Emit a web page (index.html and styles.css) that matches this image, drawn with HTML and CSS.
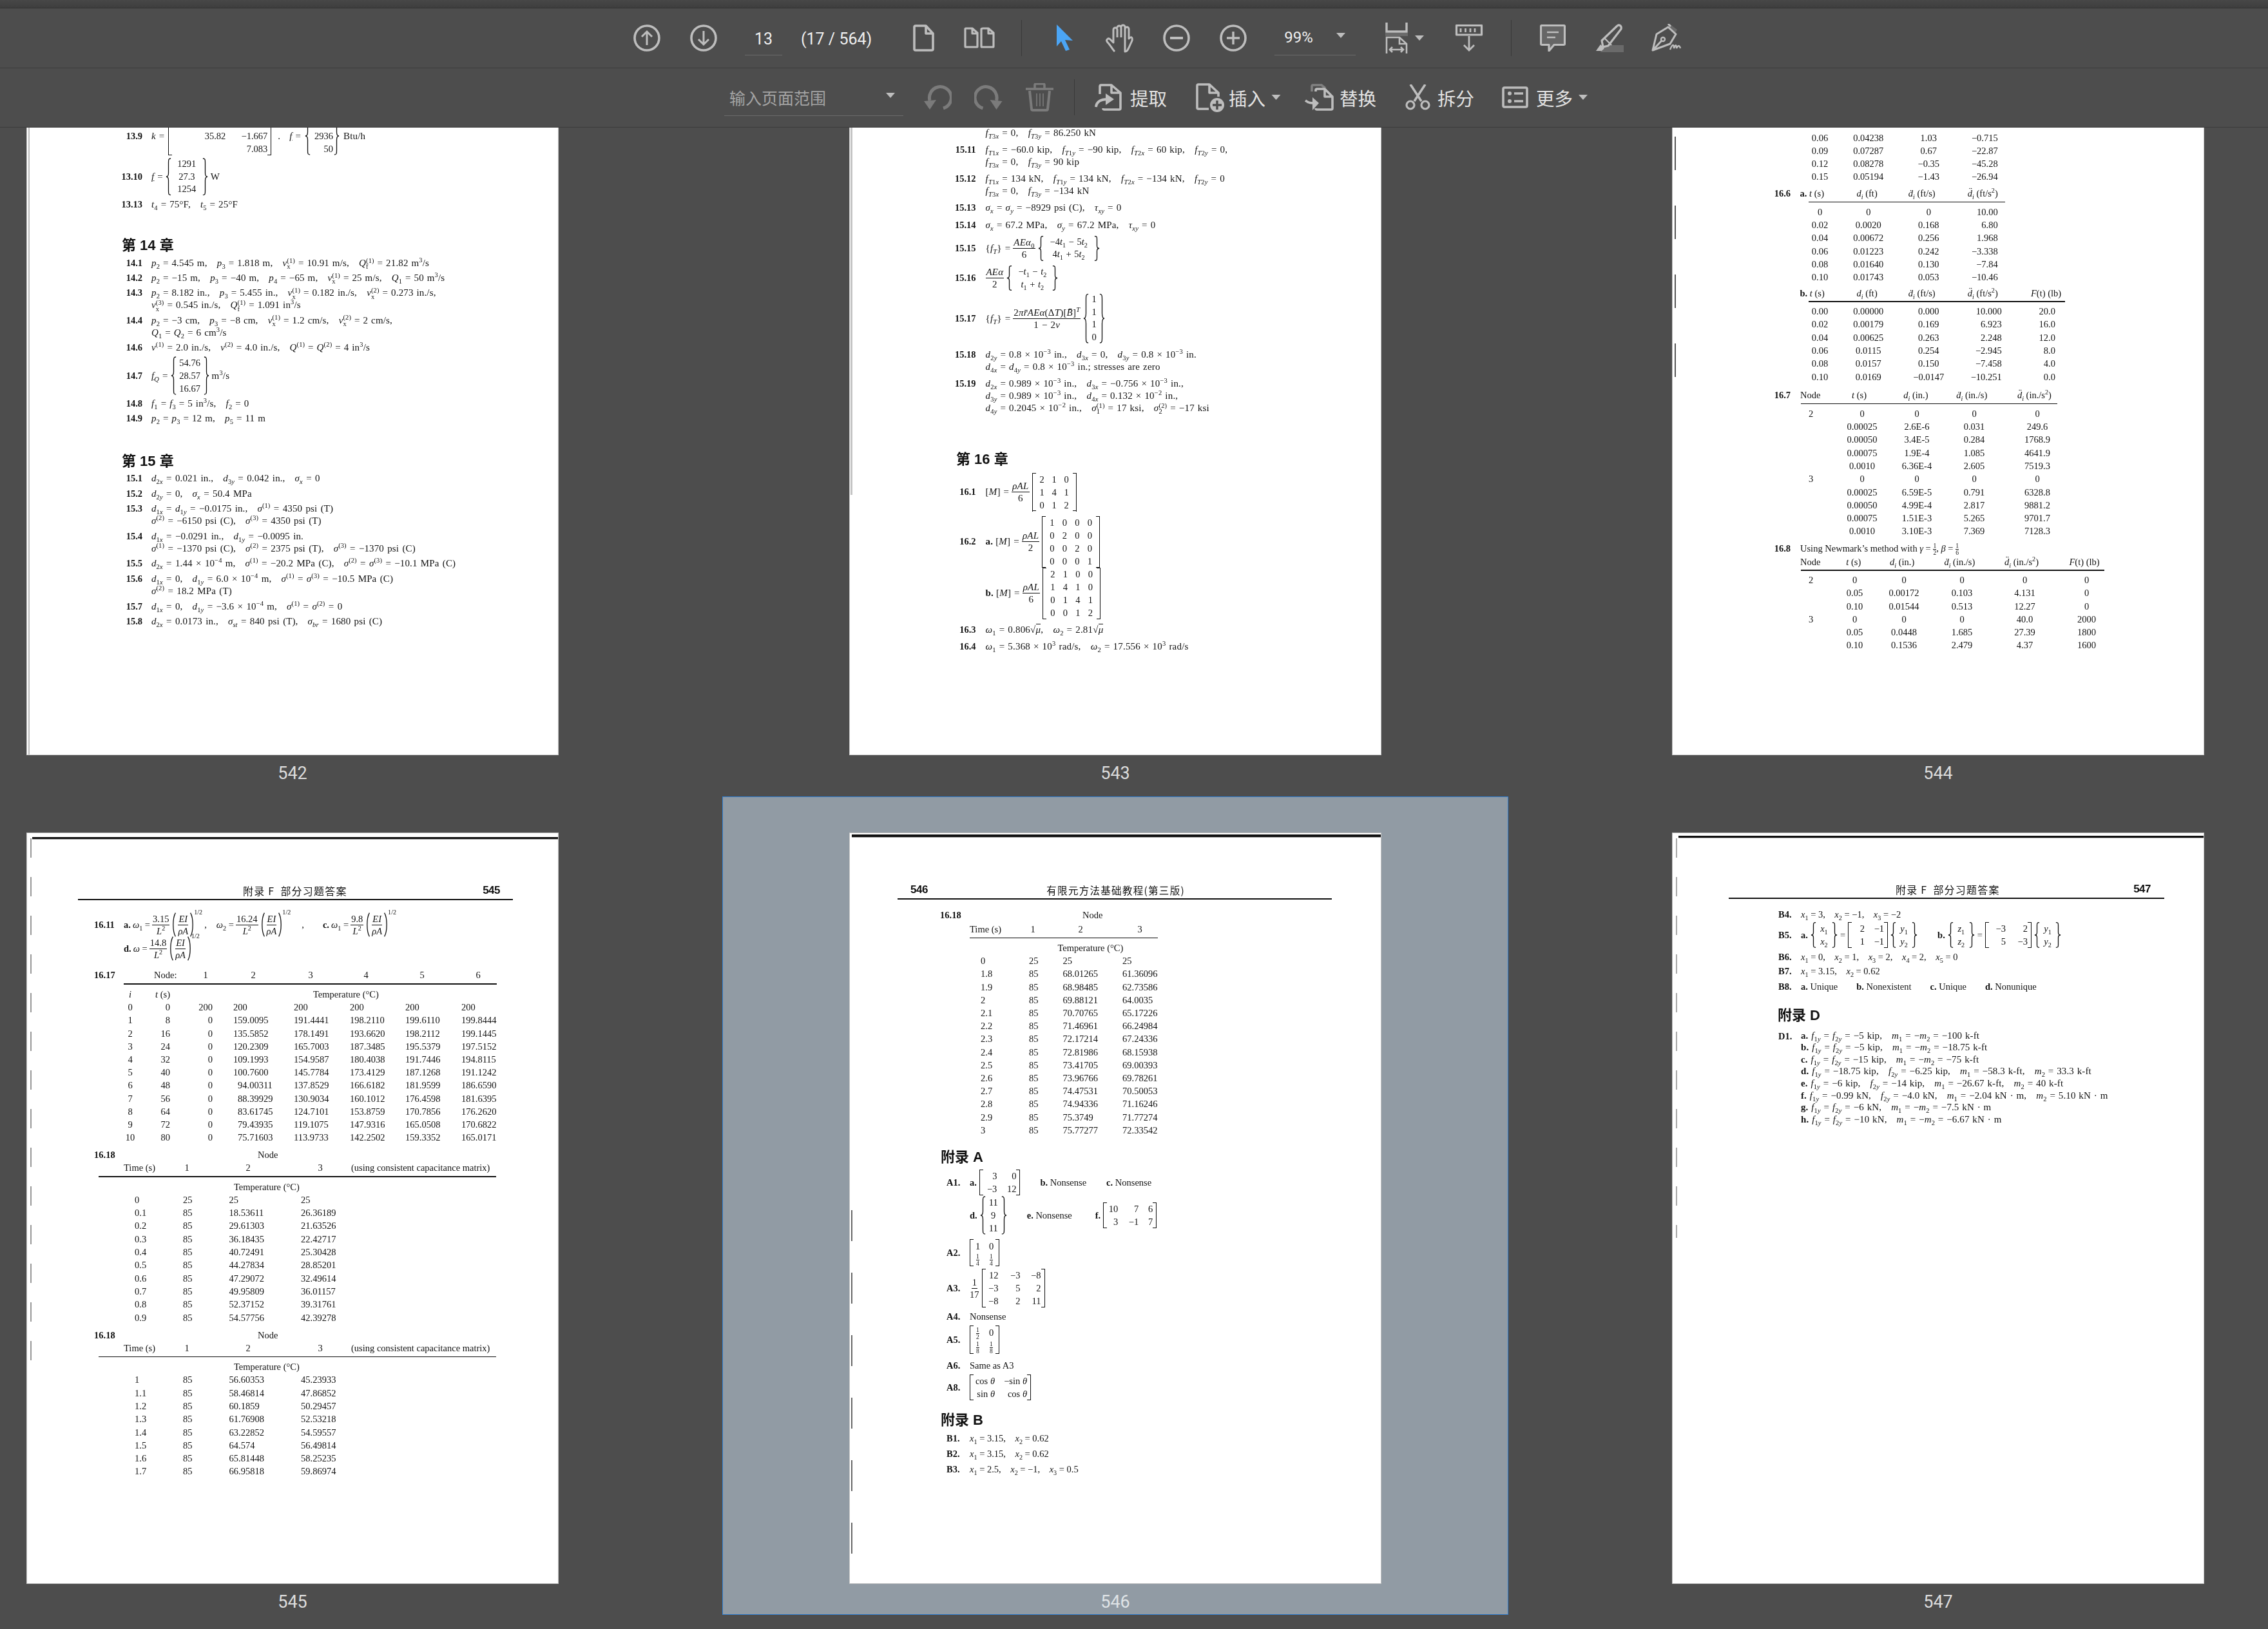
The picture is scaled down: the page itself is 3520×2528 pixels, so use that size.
FILE: index.html
```html
<!DOCTYPE html>
<html lang="zh-CN">
<head>
<meta charset="utf-8">
<title>PDF</title>
<link rel="stylesheet" href="styles.css">
</head>
<body>
<svg class="defs" aria-hidden="true">
  <symbol id="br" viewBox="0 0 10 60" preserveAspectRatio="none"><path d="M9 1C5 1 5 3 5 8V24C5 28 4 30 1 30C4 30 5 32 5 36V52C5 57 5 59 9 59" fill="none" stroke="#111" stroke-width="1.3" vector-effect="non-scaling-stroke"/></symbol>
  <symbol id="pr" viewBox="0 0 10 60" preserveAspectRatio="none"><path d="M8 1C2 14 2 46 8 59" fill="none" stroke="#111" stroke-width="1.3" vector-effect="non-scaling-stroke"/></symbol>
</svg>
<div class="strip"></div>
<div class="bar">
  <svg class="ic ml983" width="42" height="42" viewBox="0 0 42 42"><circle cx="21" cy="21" r="19" stroke-width="3.6"/><path d="M21 32V11M13 19l8-8 8 8" stroke-width="3"/></svg>
  <svg class="ic ml46" width="42" height="42" viewBox="0 0 42 42"><circle cx="21" cy="21" r="19" stroke-width="3.6"/><path d="M21 10V31M13 23l8 8 8-8" stroke-width="3"/></svg>
  <div class="inp ml43 w58 ctr">13</div>
  <div class="txt ml29">(17 / 564)</div>
  <svg class="ic ml64" width="33" height="42" viewBox="0 0 33 42"><path d="M4 2H20L31 14V38Q31 40 29 40H4Q2 40 2 38V4Q2 2 4 2ZM20 2V14H31" stroke-width="3.6" stroke-linejoin="round"/></svg>
  <svg class="ic ml46" width="48" height="33" viewBox="0 0 48 33"><path d="M3 2H13L21 9V30Q21 31 20 31H3Q2 31 2 30V3Q2 2 3 2ZM13 2V10H21M30 2H38L46 9V30Q46 31 45 31H28Q27 31 27 30V3Q27 2 30 2ZM38 2V10H46" stroke-width="3.2" stroke-linejoin="round"/></svg>
  <div class="sep ml41"></div>
  <svg class="ml53" width="27" height="41" viewBox="0 0 27 41"><path d="M1 0L26 25L14 24L21 39L15 41L8 26L1 34Z" fill="#4ba5f5"/></svg>
  <svg class="ic ml50" width="44" height="46" viewBox="0 0 44 46"><path d="M14 44C10 40 8 35 2.500 29C0 26 4 22 7 25L12 30V10A3 3 0 0 1 18 10V22M18 7A3 3 0 0 1 24 7V22M24 6A3 3 0 0 1 30 6V22M30 9A3 3 0 0 1 36 9V24C40 20 42 22 41 27L36 38C34 42 33 44 30 44Z" stroke-width="3" stroke-linejoin="round"/></svg>
  <svg class="ic ml45" width="42" height="42" viewBox="0 0 42 42"><circle cx="21" cy="21" r="19" stroke-width="3.6"/><path d="M11 21H31" stroke-width="4"/></svg>
  <svg class="ic ml46" width="42" height="42" viewBox="0 0 42 42"><circle cx="21" cy="21" r="19" stroke-width="3.6"/><path d="M11 21H31M21 11V31" stroke-width="3.4"/></svg>
  <div class="inp ml43 w126 zoom"><span>99%</span><svg class="caret" width="14" height="8" viewBox="0 0 14 8"><path d="M0 0H14L7 8Z"/></svg></div>
  <svg class="ic ml46" width="35" height="48" viewBox="0 0 35 48"><path d="M2 0V14H33V0" stroke-width="3.4"/><path class="dim" d="M0 16H35V21H0Z"/><path d="M2 48V23H22L33 33V48M22 23V33H33M7 42H28M11 38l-4 4 4 4M24 38l4 4-4 4" stroke-width="2.6"/></svg>
  <svg class="caret ml11" width="14" height="8" viewBox="0 0 14 8"><path d="M0 0H14L7 8Z"/></svg>
  <svg class="ic ml48" width="44" height="42" viewBox="0 0 44 42"><path d="M2.500 1.500H41.500V16H2.500Z" stroke-width="3.2" stroke-linejoin="round"/><path d="M9 6V12M16.500 6V12M24 6V12M31 6V12M22 18V40M14 32l8 8 8-8" stroke-width="2.8"/></svg>
  <div class="sep ml43"></div>
  <svg class="ic ml44" width="40" height="42" viewBox="0 0 40 42"><path class="dimf" d="M3 1.500H37Q38.500 1.500 38.500 3V30Q38.500 31.500 37 31.500H22L14 41V31.500H3Q1.500 31.500 1.500 30V3Q1.500 1.500 3 1.500Z" stroke-width="3.2" stroke-linejoin="round"/><path d="M11 12H29M11 20H24" stroke-width="2.400"/></svg>
  <svg class="ic ml46" width="44" height="44" viewBox="0 0 44 44"><path class="dim" d="M12 33H44V44H8Z"/><path d="M10 26L34 3Q37 1 39 3Q41 5 40 8L20 34L12 36Z" stroke-width="3.200" stroke-linejoin="round"/><path class="solid" d="M8 32l6 6-4 4H1Z"/><path d="M14 22L25 33" stroke-width="2.400"/></svg>
  <svg class="ic ml42" width="47" height="43" viewBox="0 0 47 43"><path class="dim" d="M27 7L37 16L41 9L30 1Z"/><path d="M27 5L39 16L30 31L3 41L9 16ZM4 40L17 26M31 4L27 0" stroke-width="3" stroke-linejoin="round"/><circle cx="19" cy="24" r="3" stroke-width="2.400"/><path d="M30 40C34 30 36 32 36 38C39 30 40 34 40 38C43 32 45 34 46 38" stroke-width="2.400"/></svg>
</div>
<div class="bar">
  <div class="inp2 ml1124"><span>输入页面范围</span><svg class="caret" width="14" height="8" viewBox="0 0 14 8"><path d="M0 0H14L7 8Z"/></svg></div>
  <svg class="ic off ml32" width="43" height="38" viewBox="0 0 43 38"><path d="M30 36A17 17 0 1 0 9 24" stroke-width="5"/><path class="solid" d="M0 25L19 23L9 38Z"/></svg>
  <svg class="ic off ml35" width="44" height="38" viewBox="0 0 43 38"><path d="M13 36A17 17 0 1 1 34 24" stroke-width="5"/><path class="solid" d="M43 25L24 23L34 38Z"/></svg>
  <svg class="ic off ml36" width="43" height="44" viewBox="0 0 43 44"><path d="M0 9H43M14 8V3Q14 1 16 1H27Q29 1 29 3V8" stroke-width="3.600"/><path d="M6 12L9 40Q9 42 11 42H32Q34 42 34 40L37 12" stroke-width="4"/><path d="M17 16V36M22 16V36M27 16V36" stroke-width="1.600"/></svg>
  <div class="sep ml32 tall"></div>
  <svg class="ic ml30" width="43" height="42" viewBox="0 0 43 42"><path d="M9 16V4Q9 2 11 2H27L41 14V38Q41 40 39 40H16Q14 40 14 38M27 2V14H41" stroke-width="3.600" stroke-linejoin="round"/><path d="M3 36C4 27 12 24 21 24" stroke-width="4"/><path class="solid" d="M18 15L31 24L18 33Z"/></svg>
  <div class="act ml13">提取</div>
  <svg class="ic ml44" width="44" height="45" viewBox="0 0 44 45"><path d="M20 40H4Q2 40 2 38V4Q2 2 4 2H21L35 15V21M21 2V15H35" stroke-width="3.600" stroke-linejoin="round"/><circle class="solid" cx="33" cy="34" r="11"/><path class="hole" d="M33 27V41M26 34H40" stroke-width="3.400"/></svg>
  <div class="act ml7">插入</div>
  <svg class="caret ml8" width="15" height="8" viewBox="0 0 14 8"><path d="M0 0H14L7 8Z"/></svg>
  <svg class="ic ml37" width="45" height="42" viewBox="0 0 45 42"><path class="ghost" d="M11 12V4Q11 2 13 2H26L32 7" stroke-width="3.600"/><path d="M17 12V10Q17 8 19 8H31L43 20V38Q43 40 41 40H19Q17 40 17 38M31 8V20H43" stroke-width="3.600" stroke-linejoin="round"/><path d="M1 26C6 30 10 30 15 30" stroke-width="3.600"/><path class="solid" d="M12 21L22 30L12 41Z"/></svg>
  <div class="act ml9">替换</div>
  <svg class="ic ml44" width="39" height="40" viewBox="0 0 39 40"><path d="M8 0L25 26M31 0L14 26" stroke-width="3.600"/><circle cx="8" cy="32" r="6" stroke-width="3.200"/><circle cx="31" cy="32" r="6" stroke-width="3.200"/></svg>
  <div class="act ml11">拆分</div>
  <svg class="ic ml42" width="41" height="34" viewBox="0 0 41 34"><rect x="2" y="2" width="37" height="30" rx="2" stroke-width="3.600"/><circle class="solid" cx="12" cy="11" r="3"/><circle class="solid" cx="12" cy="23" r="3"/><path d="M19 11H33M19 23H33" stroke-width="3.400"/></svg>
  <div class="act ml12">更多</div>
  <svg class="caret ml8" width="14" height="8" viewBox="0 0 14 8"><path d="M0 0H14L7 8Z"/></svg>
</div>

<main class="grid">
  <!-- 542 -->
  <section class="cell top">
    <div class="sheet short p542">
      <div class="edge e542"></div>
      <div class="doc">
        <div class="q mid first">
          <b class="n">13.9</b>
          <div class="a f g6"><span><i>k</i> =</span>
            <div class="mx r m139"><span></span><span></span><span>35.82</span><span>&minus;1.667</span><span></span><span>7.083</span></div>
            <span class="ml4">.</span><span class="ml8"><i class="u">f</i> =</span>
            <div class="bc m139b"><svg class="b"><use href="#br"/></svg><div><span></span><span>2936</span><span>50</span></div><svg class="b"><use href="#br"/></svg></div>
            <span>Btu/h</span>
          </div>
        </div>
        <div class="q mid">
          <b class="n">13.10</b>
          <div class="a f g4"><span><i class="u">f</i> =</span>
            <div class="bc w46"><svg class="b"><use href="#br"/></svg><div><span>1291</span><span>27.3</span><span>1254</span></div><svg class="b"><use href="#br"/></svg></div>
            <span>W</span>
          </div>
        </div>
        <div class="q"><b class="n">13.13</b><div class="a"><i>t</i><sub>4</sub> = 75&deg;F,&emsp;<i>t</i><sub>5</sub> = 25&deg;F</div></div>
        <div class="ch c14">第 14 章</div>
        <div class="q"><b class="n">14.1</b><div class="a"><i>p</i><sub>2</sub> = 4.545 m,&emsp;<i>p</i><sub>3</sub> = 1.818 m,&emsp;<i>v</i><span class="ss"><sup>(1)</sup><sub>x</sub></span> = 10.91 m/s,&emsp;<i>Q</i><span class="ss"><sup>(1)</sup><sub>f</sub></span> = 21.82 m<sup>3</sup>/s</div></div>
        <div class="q"><b class="n">14.2</b><div class="a"><i>p</i><sub>2</sub> = &minus;15 m,&emsp;<i>p</i><sub>3</sub> = &minus;40 m,&emsp;<i>p</i><sub>4</sub> = &minus;65 m,&emsp;<i>v</i><span class="ss"><sup>(1)</sup><sub>x</sub></span> = 25 m/s,&emsp;<i>Q</i><sub>1</sub> = 50 m<sup>3</sup>/s</div></div>
        <div class="q"><b class="n">14.3</b><div class="a"><div><i>p</i><sub>2</sub> = 8.182 in.,&emsp;<i>p</i><sub>3</sub> = 5.455 in.,&emsp;<i>v</i><span class="ss"><sup>(1)</sup><sub>x</sub></span> = 0.182 in./s,&emsp;<i>v</i><span class="ss"><sup>(2)</sup><sub>x</sub></span> = 0.273 in./s,</div><div><i>v</i><span class="ss"><sup>(3)</sup><sub>x</sub></span> = 0.545 in./s,&emsp;<i>Q</i><span class="ss"><sup>(1)</sup><sub>f</sub></span> = 1.091 in<sup>3</sup>/s</div></div></div>
        <div class="q"><b class="n">14.4</b><div class="a"><div><i>p</i><sub>2</sub> = &minus;3 cm,&emsp;<i>p</i><sub>3</sub> = &minus;8 cm,&emsp;<i>v</i><span class="ss"><sup>(1)</sup><sub>x</sub></span> = 1.2 cm/s,&emsp;<i>v</i><span class="ss"><sup>(2)</sup><sub>x</sub></span> = 2 cm/s,</div><div><i>Q</i><sub>1</sub> = <i>Q</i><sub>2</sub> = 6 cm<sup>3</sup>/s</div></div></div>
        <div class="q"><b class="n">14.6</b><div class="a"><i>v</i><sup>(1)</sup> = 2.0 in./s,&emsp;<i>v</i><sup>(2)</sup> = 4.0 in./s,&emsp;<i>Q</i><sup>(1)</sup> = <i>Q</i><sup>(2)</sup> = 4 in<sup>3</sup>/s</div></div>
        <div class="q mid">
          <b class="n">14.7</b>
          <div class="a f g4"><span><i class="u">f</i><sub><i>Q</i></sub> =</span>
            <div class="bc w40 pitch20"><svg class="b"><use href="#br"/></svg><div><span>54.76</span><span>28.57</span><span>16.67</span></div><svg class="b"><use href="#br"/></svg></div>
            <span>m<sup>3</sup>/s</span>
          </div>
        </div>
        <div class="q"><b class="n">14.8</b><div class="a"><i>f</i><sub>1</sub> = <i>f</i><sub>3</sub> = 5 in<sup>3</sup>/s,&emsp;<i>f</i><sub>2</sub> = 0</div></div>
        <div class="q"><b class="n">14.9</b><div class="a"><i>p</i><sub>2</sub> = <i>p</i><sub>3</sub> = 12 m,&emsp;<i>p</i><sub>5</sub> = 11 m</div></div>
        <div class="ch c15">第 15 章</div>
        <div class="q"><b class="n">15.1</b><div class="a"><i>d</i><sub>2<i>x</i></sub> = 0.021 in.,&emsp;<i>d</i><sub>3<i>y</i></sub> = 0.042 in.,&emsp;<i>&sigma;</i><sub><i>x</i></sub> = 0</div></div>
        <div class="q"><b class="n">15.2</b><div class="a"><i>d</i><sub>2<i>y</i></sub> = 0,&emsp;<i>&sigma;</i><sub><i>x</i></sub> = 50.4 MPa</div></div>
        <div class="q"><b class="n">15.3</b><div class="a"><div><i>d</i><sub>1<i>x</i></sub> = <i>d</i><sub>1<i>y</i></sub> = &minus;0.0175 in.,&emsp;<i>&sigma;</i><sup>(1)</sup> = 4350 psi (T)</div><div><i>&sigma;</i><sup>(2)</sup> = &minus;6150 psi (C),&emsp;<i>&sigma;</i><sup>(3)</sup> = 4350 psi (T)</div></div></div>
        <div class="q"><b class="n">15.4</b><div class="a"><div><i>d</i><sub>1<i>x</i></sub> = &minus;0.0291 in.,&emsp;<i>d</i><sub>1<i>y</i></sub> = &minus;0.0095 in.</div><div><i>&sigma;</i><sup>(1)</sup> = &minus;1370 psi (C),&emsp;<i>&sigma;</i><sup>(2)</sup> = 2375 psi (T),&emsp;<i>&sigma;</i><sup>(3)</sup> = &minus;1370 psi (C)</div></div></div>
        <div class="q"><b class="n">15.5</b><div class="a"><i>d</i><sub>2<i>x</i></sub> = 1.44 &times; 10<sup>&minus;4</sup> m,&emsp;<i>&sigma;</i><sup>(1)</sup> = &minus;20.2 MPa (C),&emsp;<i>&sigma;</i><sup>(2)</sup> = <i>&sigma;</i><sup>(3)</sup> = &minus;10.1 MPa (C)</div></div>
        <div class="q"><b class="n">15.6</b><div class="a"><div><i>d</i><sub>1<i>x</i></sub> = 0,&emsp;<i>d</i><sub>1<i>y</i></sub> = 6.0 &times; 10<sup>&minus;4</sup> m,&emsp;<i>&sigma;</i><sup>(1)</sup> = <i>&sigma;</i><sup>(3)</sup> = &minus;10.5 MPa (C)</div><div><i>&sigma;</i><sup>(2)</sup> = 18.2 MPa (T)</div></div></div>
        <div class="q"><b class="n">15.7</b><div class="a"><i>d</i><sub>1<i>x</i></sub> = 0,&emsp;<i>d</i><sub>1<i>y</i></sub> = &minus;3.6 &times; 10<sup>&minus;4</sup> m,&emsp;<i>&sigma;</i><sup>(1)</sup> = <i>&sigma;</i><sup>(2)</sup> = 0</div></div>
        <div class="q"><b class="n">15.8</b><div class="a"><i>d</i><sub>2<i>x</i></sub> = 0.0173 in.,&emsp;<i>&sigma;</i><sub><i>st</i></sub> = 840 psi (T),&emsp;<i>&sigma;</i><sub><i>br</i></sub> = 1680 psi (C)</div></div>
      </div>
    </div>
    <div class="lab">542</div>
  </section>

  <!-- 543 -->
  <section class="cell top">
    <div class="sheet short p543">
      <div class="edge e543"></div>
      <div class="doc">
        <div class="q first"><b class="n"></b><div class="a"><i>f</i><sub><i>T</i>3<i>x</i></sub> = 0,&emsp;<i>f</i><sub><i>T</i>3<i>y</i></sub> = 86.250 kN</div></div>
        <div class="q"><b class="n">15.11</b><div class="a"><div><i>f</i><sub><i>T</i>1<i>x</i></sub> = &minus;60.0 kip,&emsp;<i>f</i><sub><i>T</i>1<i>y</i></sub> = &minus;90 kip,&emsp;<i>f</i><sub><i>T</i>2<i>x</i></sub> = 60 kip,&emsp;<i>f</i><sub><i>T</i>2<i>y</i></sub> = 0,</div><div><i>f</i><sub><i>T</i>3<i>x</i></sub> = 0,&emsp;<i>f</i><sub><i>T</i>3<i>y</i></sub> = 90 kip</div></div></div>
        <div class="q"><b class="n">15.12</b><div class="a"><div><i>f</i><sub><i>T</i>1<i>x</i></sub> = 134 kN,&emsp;<i>f</i><sub><i>T</i>1<i>y</i></sub> = 134 kN,&emsp;<i>f</i><sub><i>T</i>2<i>x</i></sub> = &minus;134 kN,&emsp;<i>f</i><sub><i>T</i>2<i>y</i></sub> = 0</div><div><i>f</i><sub><i>T</i>3<i>x</i></sub> = 0,&emsp;<i>f</i><sub><i>T</i>3<i>y</i></sub> = &minus;134 kN</div></div></div>
        <div class="q"><b class="n">15.13</b><div class="a"><i>&sigma;</i><sub><i>x</i></sub> = <i>&sigma;</i><sub><i>y</i></sub> = &minus;8929 psi (C),&emsp;<i>&tau;</i><sub><i>xy</i></sub> = 0</div></div>
        <div class="q"><b class="n">15.14</b><div class="a"><i>&sigma;</i><sub><i>x</i></sub> = 67.2 MPa,&emsp;<i>&sigma;</i><sub><i>y</i></sub> = 67.2 MPa,&emsp;<i>&tau;</i><sub><i>xy</i></sub> = 0</div></div>
        <div class="q mid"><b class="n">15.15</b>
          <div class="a f g4"><span>{<i>f<sub>T</sub></i>} =</span><span class="fr"><span><i>AE&alpha;</i><sub>0</sub></span><span>6</span></span>
            <div class="bc w76"><svg class="b"><use href="#br"/></svg><div><span>&minus;4<i>t</i><sub>1</sub> &minus; 5<i>t</i><sub>2</sub></span><span>4<i>t</i><sub>1</sub> + 5<i>t</i><sub>2</sub></span></div><svg class="b"><use href="#br"/></svg></div>
          </div></div>
        <div class="q mid"><b class="n">15.16</b>
          <div class="a f g4"><span class="fr"><span><i>AE&alpha;</i></span><span>2</span></span>
            <div class="bc w60"><svg class="b"><use href="#br"/></svg><div><span>&minus;<i>t</i><sub>1</sub> &minus; <i>t</i><sub>2</sub></span><span><i>t</i><sub>1</sub> + <i>t</i><sub>2</sub></span></div><svg class="b"><use href="#br"/></svg></div>
          </div></div>
        <div class="q mid tight"><b class="n">15.17</b>
          <div class="a f g4"><span>{<i>f<sub>T</sub></i>} =</span><span class="fr"><span>2<i>&pi;r&#772;AE&alpha;</i>(&Delta;<i>T</i>)[<i>B&#772;</i>]<sup><i>T</i></sup></span><span>1 &minus; 2<i>v</i></span></span>
            <div class="bc w14"><svg class="b"><use href="#br"/></svg><div><span>1</span><span>1</span><span>1</span><span>0</span></div><svg class="b"><use href="#br"/></svg></div>
          </div></div>
        <div class="q"><b class="n">15.18</b><div class="a"><div><i>d</i><sub>2<i>y</i></sub> = 0.8 &times; 10<sup>&minus;3</sup> in.,&emsp;<i>d</i><sub>3<i>x</i></sub> = 0,&emsp;<i>d</i><sub>3<i>y</i></sub> = 0.8 &times; 10<sup>&minus;3</sup> in.</div><div><i>d</i><sub>4<i>x</i></sub> = <i>d</i><sub>4<i>y</i></sub> = 0.8 &times; 10<sup>&minus;3</sup> in.; stresses are zero</div></div></div>
        <div class="q"><b class="n">15.19</b><div class="a"><div><i>d</i><sub>2<i>x</i></sub> = 0.989 &times; 10<sup>&minus;3</sup> in.,&emsp;<i>d</i><sub>3<i>x</i></sub> = &minus;0.756 &times; 10<sup>&minus;3</sup> in.,</div><div><i>d</i><sub>3<i>y</i></sub> = 0.989 &times; 10<sup>&minus;3</sup> in.,&emsp;<i>d</i><sub>4<i>x</i></sub> = 0.132 &times; 10<sup>&minus;2</sup> in.,</div><div><i>d</i><sub>4<i>y</i></sub> = 0.2045 &times; 10<sup>&minus;2</sup> in.,&emsp;<i>&sigma;</i><span class="ss"><sup>(1)</sup><sub>1</sub></span> = 17 ksi,&emsp;<i>&sigma;</i><span class="ss"><sup>(2)</sup><sub>2</sub></span> = &minus;17 ksi</div></div></div>
        <div class="ch c16">第 16 章</div>
        <div class="q mid"><b class="n">16.1</b>
          <div class="a f g4"><span>[<i>M</i>] =</span><span class="fr"><span><i>&rho;AL</i></span><span>6</span></span>
            <div class="mx k3 p20"><span>2</span><span>1</span><span>0</span><span>1</span><span>4</span><span>1</span><span>0</span><span>1</span><span>2</span></div>
          </div></div>
        <div class="q mid"><b class="n">16.2</b>
          <div class="a f g4"><b class="b5">a.</b><span>[<i>M</i>] =</span><span class="fr"><span><i>&rho;AL</i></span><span>2</span></span>
            <div class="mx k4 p20"><span>1</span><span>0</span><span>0</span><span>0</span><span>0</span><span>2</span><span>0</span><span>0</span><span>0</span><span>0</span><span>2</span><span>0</span><span>0</span><span>0</span><span>0</span><span>1</span></div>
          </div></div>
        <div class="q mid flush"><b class="n"></b>
          <div class="a f g4"><b class="b5">b.</b><span>[<i>M</i>] =</span><span class="fr"><span><i>&rho;AL</i></span><span>6</span></span>
            <div class="mx k4 p20"><span>2</span><span>1</span><span>0</span><span>0</span><span>1</span><span>4</span><span>1</span><span>0</span><span>0</span><span>1</span><span>4</span><span>1</span><span>0</span><span>0</span><span>1</span><span>2</span></div>
          </div></div>
        <div class="q"><b class="n">16.3</b><div class="a"><i>&omega;</i><sub>1</sub> = 0.806&radic;<span class="ov"><i>&mu;</i></span>,&emsp;<i>&omega;</i><sub>2</sub> = 2.81&radic;<span class="ov"><i>&mu;</i></span></div></div>
        <div class="q"><b class="n">16.4</b><div class="a"><i>&omega;</i><sub>1</sub> = 5.368 &times; 10<sup>3</sup> rad/s,&emsp;<i>&omega;</i><sub>2</sub> = 17.556 &times; 10<sup>3</sup> rad/s</div></div>
      </div>
    </div>
    <div class="lab">543</div>
  </section>

  <!-- 544 -->
  <section class="cell top">
    <div class="sheet short p544">
      <div class="edge e544"></div>
      <div class="doc">
        <div class="sec s0"><b class="n"></b><div class="a">
          <div class="tb t66 s00">
            <span>0.06</span><span>0.04238</span><span>1.03</span><span>&minus;0.715</span>
            <span>0.09</span><span>0.07287</span><span>0.67</span><span>&minus;22.87</span>
            <span>0.12</span><span>0.08278</span><span>&minus;0.35</span><span>&minus;45.28</span>
            <span>0.15</span><span>0.05194</span><span>&minus;1.43</span><span>&minus;26.94</span>
          </div></div></div>
        <div class="sec s1"><b class="n">16.6</b><div class="a">
          <div class="th h66"><span><b>a.</b> <i>t</i> (s)</span><span><i>d<sub>i</sub></i> (ft)</span><span><i>&#7691;<sub>i</sub></i> (ft/s)</span><span><i>d&#776;<sub>i</sub></i> (ft/s<sup>2</sup>)</span></div>
          <div class="rule r66a"></div>
          <div class="tb t66">
            <span>0</span><span>0</span><span>0</span><span>10.00</span>
            <span>0.02</span><span>0.0020</span><span>0.168</span><span>6.80</span>
            <span>0.04</span><span>0.00672</span><span>0.256</span><span>1.968</span>
            <span>0.06</span><span>0.01223</span><span>0.242</span><span>&minus;3.338</span>
            <span>0.08</span><span>0.01640</span><span>0.130</span><span>&minus;7.84</span>
            <span>0.10</span><span>0.01743</span><span>0.053</span><span>&minus;10.46</span>
          </div></div></div>
        <div class="sec s2"><b class="n"></b><div class="a">
          <div class="th h66b"><span><b>b.</b> <i>t</i> (s)</span><span><i>d<sub>i</sub></i> (ft)</span><span><i>&#7691;<sub>i</sub></i> (ft/s)</span><span><i>d&#776;<sub>i</sub></i> (ft/s<sup>2</sup>)</span><span><i>F</i>(t) (lb)</span></div>
          <div class="rule r66b"></div>
          <div class="tb t66b">
            <span>0.00</span><span>0.00000</span><span>0.000</span><span>10.000</span><span>20.0</span>
            <span>0.02</span><span>0.00179</span><span>0.169</span><span>6.923</span><span>16.0</span>
            <span>0.04</span><span>0.00625</span><span>0.263</span><span>2.248</span><span>12.0</span>
            <span>0.06</span><span>0.0115</span><span>0.254</span><span>&minus;2.945</span><span>8.0</span>
            <span>0.08</span><span>0.0157</span><span>0.150</span><span>&minus;7.458</span><span>4.0</span>
            <span>0.10</span><span>0.0169</span><span>&minus;0.0147</span><span>&minus;10.251</span><span>0.0</span>
          </div></div></div>
        <div class="sec s3"><b class="n">16.7</b><div class="a">
          <div class="th h67"><span>Node</span><span><i>t</i> (s)</span><span><i>d<sub>i</sub></i> (in.)</span><span><i>&#7691;<sub>i</sub></i> (in./s)</span><span><i>d&#776;<sub>i</sub></i> (in./s<sup>2</sup>)</span></div>
          <div class="rule r67"></div>
          <div class="tb t67">
            <span>2</span><span>0</span><span>0</span><span>0</span><span>0</span>
            <span></span><span>0.00025</span><span>2.6E-6</span><span>0.031</span><span>249.6</span>
            <span></span><span>0.00050</span><span>3.4E-5</span><span>0.284</span><span>1768.9</span>
            <span></span><span>0.00075</span><span>1.9E-4</span><span>1.085</span><span>4641.9</span>
            <span></span><span>0.0010</span><span>6.36E-4</span><span>2.605</span><span>7519.3</span>
            <span>3</span><span>0</span><span>0</span><span>0</span><span>0</span>
            <span></span><span>0.00025</span><span>6.59E-5</span><span>0.791</span><span>6328.8</span>
            <span></span><span>0.00050</span><span>4.99E-4</span><span>2.817</span><span>9881.2</span>
            <span></span><span>0.00075</span><span>1.51E-3</span><span>5.265</span><span>9701.7</span>
            <span></span><span>0.0010</span><span>3.10E-3</span><span>7.369</span><span>7128.3</span>
          </div></div></div>
        <div class="sec s4"><b class="n">16.8</b><div class="a">
          <div class="th top19"><span>Using Newmark&rsquo;s method with <i>&gamma;</i> = <span class="sf"><span>1</span><span>2</span></span>, <i>&beta;</i> = <span class="sf"><span>1</span><span>6</span></span></span></div>
          <div class="th h68"><span>Node</span><span><i>t</i> (s)</span><span><i>d<sub>i</sub></i> (in.)</span><span><i>&#7691;<sub>i</sub></i> (in./s)</span><span><i>d&#776;<sub>i</sub></i> (in./s<sup>2</sup>)</span><span><i>F</i>(t) (lb)</span></div>
          <div class="rule r68"></div>
          <div class="tb t68">
            <span>2</span><span>0</span><span>0</span><span>0</span><span>0</span><span>0</span>
            <span></span><span>0.05</span><span>0.00172</span><span>0.103</span><span>4.131</span><span>0</span>
            <span></span><span>0.10</span><span>0.01544</span><span>0.513</span><span>12.27</span><span>0</span>
            <span>3</span><span>0</span><span>0</span><span>0</span><span>40.0</span><span>2000</span>
            <span></span><span>0.05</span><span>0.0448</span><span>1.685</span><span>27.39</span><span>1800</span>
            <span></span><span>0.10</span><span>0.1536</span><span>2.479</span><span>4.37</span><span>1600</span>
          </div></div></div>
      </div>
    </div>
    <div class="lab">544</div>
  </section>

  <!-- 545 -->
  <section class="cell bot">
    <div class="sheet tall-sheet p545">
      <div class="scan s545"></div>
      <div class="edge e545"></div>
      <div class="doc">
        <div class="hd h545"><span class="ttl">附录 F&ensp;部分习题答案</span><span class="pn">545</span></div>
        <div class="body">
          <div class="q mid m19"><b class="n">16.11</b>
            <div class="a f g3"><b>a.</b><span><i>&omega;</i><sub>1</sub> =</span><span class="fr"><span>3.15</span><span><i>L</i><sup>2</sup></span></span>
              <span class="par"><svg class="b"><use href="#pr"/></svg><span class="fr"><span><i>EI</i></span><span><i>&rho;A</i></span></span><svg class="b"><use href="#pr"/></svg><sup class="up">1/2</sup></span><span>,</span>
              <span class="ml12"><i>&omega;</i><sub>2</sub> =</span><span class="fr"><span>16.24</span><span><i>L</i><sup>2</sup></span></span>
              <span class="par"><svg class="b"><use href="#pr"/></svg><span class="fr"><span><i>EI</i></span><span><i>&rho;A</i></span></span><svg class="b"><use href="#pr"/></svg><sup class="up">1/2</sup></span><span class="ml14">,</span>
              <b class="ml26">c.</b><span><i>&omega;</i><sub>1</sub> =</span><span class="fr"><span>9.8</span><span><i>L</i><sup>2</sup></span></span>
              <span class="par"><svg class="b"><use href="#pr"/></svg><span class="fr"><span><i>EI</i></span><span><i>&rho;A</i></span></span><svg class="b"><use href="#pr"/></svg><sup class="up">1/2</sup></span>
            </div></div>
          <div class="q mid mn1"><b class="n"></b>
            <div class="a f g3"><b>d.</b><span><i>&omega;</i> =</span><span class="fr"><span>14.8</span><span><i>L</i><sup>2</sup></span></span>
              <span class="par"><svg class="b"><use href="#pr"/></svg><span class="fr"><span><i>EI</i></span><span><i>&rho;A</i></span></span><svg class="b"><use href="#pr"/></svg><sup class="up">1/2</sup></span>
            </div></div>
          <div class="q m12"><b class="n">16.17</b><div class="a th h617"><span>Node:</span><span>1</span><span>2</span><span>3</span><span>4</span><span>5</span><span>6</span></div></div>
          <div class="rule r617"></div>
          <div class="ghead"><span class="tr1"><i>i</i></span><span class="tr2"><i>t</i> (s)</span><span class="tr3">Temperature (&deg;C)</span></div>
          <div class="t617">
            <span>0</span><span>0</span><span>200</span><span>200</span><span>200</span><span>200</span><span>200</span><span>200</span>
            <span>1</span><span>8</span><span>0</span><span>159.0095</span><span>191.4441</span><span>198.2110</span><span>199.6110</span><span>199.8444</span>
            <span>2</span><span>16</span><span>0</span><span>135.5852</span><span>178.1491</span><span>193.6620</span><span>198.2112</span><span>199.1445</span>
            <span>3</span><span>24</span><span>0</span><span>120.2309</span><span>165.7003</span><span>187.3485</span><span>195.5379</span><span>197.5152</span>
            <span>4</span><span>32</span><span>0</span><span>109.1993</span><span>154.9587</span><span>180.4038</span><span>191.7446</span><span>194.8115</span>
            <span>5</span><span>40</span><span>0</span><span>100.7600</span><span>145.7784</span><span>173.4129</span><span>187.1268</span><span>191.1242</span>
            <span>6</span><span>48</span><span>0</span><span class="in">94.00311</span><span>137.8529</span><span>166.6182</span><span>181.9599</span><span>186.6590</span>
            <span>7</span><span>56</span><span>0</span><span class="in">88.39929</span><span>130.9034</span><span>160.1012</span><span>176.4598</span><span>181.6395</span>
            <span>8</span><span>64</span><span>0</span><span class="in">83.61745</span><span>124.7101</span><span>153.8759</span><span>170.7856</span><span>176.2620</span>
            <span>9</span><span>72</span><span>0</span><span class="in">79.43935</span><span>119.1075</span><span>147.9316</span><span>165.0508</span><span>170.6822</span>
            <span>10</span><span>80</span><span>0</span><span class="in">75.71603</span><span>113.9733</span><span>142.2502</span><span>159.3352</span><span>165.0171</span>
          </div>
          <div class="q m7"><b class="n">16.18</b><div class="a node n545">Node</div></div>
          <div class="q m0"><b class="n"></b><div class="a th h618"><span>Time (s)</span><span>1</span><span>2</span><span>3</span><span>(using consistent capacitance matrix)</span></div></div>
          <div class="rule r618"></div>
          <div class="tmp t545">Temperature (&deg;C)</div>
          <div class="t18">
            <span>0</span><span>25</span><span>25</span><span>25</span>
            <span>0.1</span><span>85</span><span>18.53611</span><span>26.36189</span>
            <span>0.2</span><span>85</span><span>29.61303</span><span>21.63526</span>
            <span>0.3</span><span>85</span><span>36.18435</span><span>22.42717</span>
            <span>0.4</span><span>85</span><span>40.72491</span><span>25.30428</span>
            <span>0.5</span><span>85</span><span>44.27834</span><span>28.85201</span>
            <span>0.6</span><span>85</span><span>47.29072</span><span>32.49614</span>
            <span>0.7</span><span>85</span><span>49.95809</span><span>36.01157</span>
            <span>0.8</span><span>85</span><span>52.37152</span><span>39.31761</span>
            <span>0.9</span><span>85</span><span>54.57756</span><span>42.39278</span>
          </div>
          <div class="q m7"><b class="n">16.18</b><div class="a node n545">Node</div></div>
          <div class="q m0"><b class="n"></b><div class="a th h618"><span>Time (s)</span><span>1</span><span>2</span><span>3</span><span>(using consistent capacitance matrix)</span></div></div>
          <div class="rule r618"></div>
          <div class="tmp t545">Temperature (&deg;C)</div>
          <div class="t18">
            <span>1</span><span>85</span><span>56.60353</span><span>45.23933</span>
            <span>1.1</span><span>85</span><span>58.46814</span><span>47.86852</span>
            <span>1.2</span><span>85</span><span>60.1859</span><span>50.29457</span>
            <span>1.3</span><span>85</span><span>61.76908</span><span>52.53218</span>
            <span>1.4</span><span>85</span><span>63.22852</span><span>54.59557</span>
            <span>1.5</span><span>85</span><span>64.574</span><span>56.49814</span>
            <span>1.6</span><span>85</span><span>65.81448</span><span>58.25235</span>
            <span>1.7</span><span>85</span><span>66.95818</span><span>59.86974</span>
          </div>
        </div>
      </div>
    </div>
    <div class="lab">545</div>
  </section>

  <!-- 546 -->
  <section class="cell bot sel">
    <div class="sheet tall-sheet p546">
      <div class="scan s546"></div>
      <div class="edge e546"></div>
      <div class="doc">
        <div class="hd h546"><span class="pn">546</span><span class="ttl">有限元方法基础教程(第三版)</span></div>
        <div class="body">
          <div class="q m14"><b class="n">16.18</b><div class="a node n546">Node</div></div>
          <div class="q m2"><b class="n"></b><div class="a th h618b"><span>Time (s)</span><span>1</span><span>2</span><span>3</span></div></div>
          <div class="rule r618b"></div>
          <div class="tmp t546">Temperature (&deg;C)</div>
          <div class="t18 b">
            <span>0</span><span>25</span><span>25</span><span>25</span>
            <span>1.8</span><span>85</span><span>68.01265</span><span>61.36096</span>
            <span>1.9</span><span>85</span><span>68.98485</span><span>62.73586</span>
            <span>2</span><span>85</span><span>69.88121</span><span>64.0035</span>
            <span>2.1</span><span>85</span><span>70.70765</span><span>65.17226</span>
            <span>2.2</span><span>85</span><span>71.46961</span><span>66.24984</span>
            <span>2.3</span><span>85</span><span>72.17214</span><span>67.24336</span>
            <span>2.4</span><span>85</span><span>72.81986</span><span>68.15938</span>
            <span>2.5</span><span>85</span><span>73.41705</span><span>69.00393</span>
            <span>2.6</span><span>85</span><span>73.96766</span><span>69.78261</span>
            <span>2.7</span><span>85</span><span>74.47531</span><span>70.50053</span>
            <span>2.8</span><span>85</span><span>74.94336</span><span>71.16246</span>
            <span>2.9</span><span>85</span><span>75.3749</span><span>71.77274</span>
            <span>3</span><span>85</span><span>75.77277</span><span>72.33542</span>
          </div>
          <div class="app">
            <div class="ch ca">附录 A</div>
            <div class="q mid m5"><b class="n">A1.</b>
              <div class="a f g4"><b>a.</b>
                <div class="mx r mA1a p20"><span>3</span><span>0</span><span>&minus;3</span><span>12</span></div>
                <span class="ml27"><b>b.</b> Nonsense</span><span class="ml27"><b>c.</b> Nonsense</span>
              </div></div>
            <div class="q mid m1"><b class="n"></b>
              <div class="a f g4"><b>d.</b>
                <div class="bc w22 pitch20"><svg class="b"><use href="#br"/></svg><div><span>11</span><span>9</span><span>11</span></div><svg class="b"><use href="#br"/></svg></div>
                <span class="ml27"><b>e.</b> Nonsense</span><b class="ml32">f.</b>
                <div class="mx r mA1f p20"><span>10</span><span>7</span><span>6</span><span>3</span><span>&minus;1</span><span>7</span></div>
              </div></div>
            <div class="q mid m7"><b class="n">A2.</b>
              <div class="a f"><div class="mx mA2 p21"><span>1</span><span>0</span><span><span class="sf"><span>1</span><span>4</span></span></span><span><span class="sf"><span>1</span><span>4</span></span></span></div></div></div>
            <div class="q mid m4"><b class="n">A3.</b>
              <div class="a f g4"><span class="fr"><span>1</span><span>17</span></span>
                <div class="mx r mA3 p20"><span>12</span><span>&minus;3</span><span>&minus;8</span><span>&minus;3</span><span>5</span><span>2</span><span>&minus;8</span><span>2</span><span>11</span></div></div></div>
            <div class="q m4"><b class="n">A4.</b><div class="a">Nonsense</div></div>
            <div class="q mid m4"><b class="n">A5.</b>
              <div class="a f"><div class="mx mA2 p22"><span><span class="sf"><span>1</span><span>2</span></span></span><span>0</span><span><span class="sf"><span>1</span><span>8</span></span></span><span><span class="sf"><span>1</span><span>8</span></span></span></div></div></div>
            <div class="q m8"><b class="n">A6.</b><div class="a">Same as A3</div></div>
            <div class="q mid m4"><b class="n">A8.</b>
              <div class="a f"><div class="mx r mA8 p20"><span>cos <i>&theta;</i></span><span>&minus;sin <i>&theta;</i></span><span>sin <i>&theta;</i></span><span>cos <i>&theta;</i></span></div></div></div>
            <div class="ch cb">附录 B</div>
            <div class="q m4"><b class="n">B1.</b><div class="a"><i>x</i><sub>1</sub> = 3.15,&emsp;<i>x</i><sub>2</sub> = 0.62</div></div>
            <div class="q m4"><b class="n">B2.</b><div class="a"><i>x</i><sub>1</sub> = 3.15,&emsp;<i>x</i><sub>2</sub> = 0.62</div></div>
            <div class="q m4"><b class="n">B3.</b><div class="a"><i>x</i><sub>1</sub> = 2.5,&emsp;<i>x</i><sub>2</sub> = &minus;1,&emsp;<i>x</i><sub>3</sub> = 0.5</div></div>
          </div>
        </div>
      </div>
    </div>
    <div class="lab">546</div>
  </section>

  <!-- 547 -->
  <section class="cell bot">
    <div class="sheet tall-sheet p547">
      <div class="scan s547"></div>
      <div class="edge e547"></div>
      <div class="doc">
        <div class="hd h547"><span class="ttl">附录 F&ensp;部分习题答案</span><span class="pn">547</span></div>
        <div class="body">
          <div class="q m14"><b class="n">B4.</b><div class="a"><i>x</i><sub>1</sub> = 3,&emsp;<i>x</i><sub>2</sub> = &minus;1,&emsp;<i>x</i><sub>3</sub> = &minus;2</div></div>
          <div class="q mid m2"><b class="n">B5.</b>
            <div class="a f g4"><b>a.</b>
              <div class="bc w22"><svg class="b"><use href="#br"/></svg><div><span><i>x</i><sub>1</sub></span><span><i>x</i><sub>2</sub></span></div><svg class="b"><use href="#br"/></svg></div><span>=</span>
              <div class="mx r mB5a p20"><span>2</span><span>&minus;1</span><span>1</span><span>&minus;1</span></div>
              <div class="bc w22"><svg class="b"><use href="#br"/></svg><div><span><i>y</i><sub>1</sub></span><span><i>y</i><sub>2</sub></span></div><svg class="b"><use href="#br"/></svg></div>
              <b class="ml27">b.</b>
              <div class="bc w22"><svg class="b"><use href="#br"/></svg><div><span><i>z</i><sub>1</sub></span><span><i>z</i><sub>2</sub></span></div><svg class="b"><use href="#br"/></svg></div><span>=</span>
              <div class="mx r mB5b p20"><span>&minus;3</span><span>2</span><span>5</span><span>&minus;3</span></div>
              <div class="bc w22"><svg class="b"><use href="#br"/></svg><div><span><i>y</i><sub>1</sub></span><span><i>y</i><sub>2</sub></span></div><svg class="b"><use href="#br"/></svg></div>
            </div></div>
          <div class="q m4"><b class="n">B6.</b><div class="a"><i>x</i><sub>1</sub> = 0,&emsp;<i>x</i><sub>2</sub> = 1,&emsp;<i>x</i><sub>3</sub> = 2,&emsp;<i>x</i><sub>4</sub> = 2,&emsp;<i>x</i><sub>5</sub> = 0</div></div>
          <div class="q m2"><b class="n">B7.</b><div class="a"><i>x</i><sub>1</sub> = 3.15,&emsp;<i>x</i><sub>2</sub> = 0.62</div></div>
          <div class="q m4"><b class="n">B8.</b><div class="a f"><span><b>a.</b> Unique</span><span class="ml29"><b>b.</b> Nonexistent</span><span class="ml29"><b>c.</b> Unique</span><span class="ml29"><b>d.</b> Nonunique</span></div></div>
          <div class="ch cd">附录 D</div>
          <div class="q d1"><b class="n">D1.</b><div class="a dl">
            <div><b>a.</b> <i>f</i><sub>1<i>y</i></sub> = <i>f</i><sub>2<i>y</i></sub> = &minus;5 kip,&emsp;<i>m</i><sub>1</sub> = &minus;<i>m</i><sub>2</sub> = &minus;100 k-ft</div>
            <div><b>b.</b> <i>f</i><sub>1<i>y</i></sub> = <i>f</i><sub>2<i>y</i></sub> = &minus;5 kip,&emsp;<i>m</i><sub>1</sub> = &minus;<i>m</i><sub>2</sub> = &minus;18.75 k-ft</div>
            <div><b>c.</b> <i>f</i><sub>1<i>y</i></sub> = <i>f</i><sub>2<i>y</i></sub> = &minus;15 kip,&emsp;<i>m</i><sub>1</sub> = &minus;<i>m</i><sub>2</sub> = &minus;75 k-ft</div>
            <div><b>d.</b> <i>f</i><sub>1<i>y</i></sub> = &minus;18.75 kip,&emsp;<i>f</i><sub>2<i>y</i></sub> = &minus;6.25 kip,&emsp;<i>m</i><sub>1</sub> = &minus;58.3 k-ft,&emsp;<i>m</i><sub>2</sub> = 33.3 k-ft</div>
            <div><b>e.</b> <i>f</i><sub>1<i>y</i></sub> = &minus;6 kip,&emsp;<i>f</i><sub>2<i>y</i></sub> = &minus;14 kip,&emsp;<i>m</i><sub>1</sub> = &minus;26.67 k-ft,&emsp;<i>m</i><sub>2</sub> = 40 k-ft</div>
            <div><b>f.</b> <i>f</i><sub>1<i>y</i></sub> = &minus;0.99 kN,&emsp;<i>f</i><sub>2<i>y</i></sub> = &minus;4.0 kN,&emsp;<i>m</i><sub>1</sub> = &minus;2.04 kN &middot; m,&emsp;<i>m</i><sub>2</sub> = 5.10 kN &middot; m</div>
            <div><b>g.</b> <i>f</i><sub>1<i>y</i></sub> = <i>f</i><sub>2<i>y</i></sub> = &minus;6 kN,&emsp;<i>m</i><sub>1</sub> = &minus;<i>m</i><sub>2</sub> = &minus;7.5 kN &middot; m</div>
            <div><b>h.</b> <i>f</i><sub>1<i>y</i></sub> = <i>f</i><sub>2<i>y</i></sub> = &minus;10 kN,&emsp;<i>m</i><sub>1</sub> = &minus;<i>m</i><sub>2</sub> = &minus;6.67 kN &middot; m</div>
          </div></div>
        </div>
      </div>
    </div>
    <div class="lab">547</div>
  </section>
</main>
</body>
</html>
```
FILE: styles.css
```css
*{box-sizing:border-box}
html,body{margin:0;padding:0}
body{width:3520px;height:2528px;overflow:hidden;background:#4d4d4d;font-family:"Noto Sans CJK SC",Roboto,sans-serif;color:#e8e8e8}
.defs{display:none}

/* toolbars */
.strip{height:13px;background:linear-gradient(#474747,#3e3e3e);border-bottom:1px solid #333}
.bar{height:92.5px;display:flex;align-items:center;background:#4d4d4d;border-bottom:1px solid #3b3b3b}
.bar>*{flex:none}
.ic{fill:none;stroke:#bdbdbd;stroke-linecap:butt;color:#bdbdbd}
.ic.off{stroke:#7b7b7b;color:#7b7b7b}
.ic .dim{fill:#6a6a6a;stroke:none}
.ic .dimf{fill:#666}
.ic .solid{fill:currentColor;stroke:none}
.ic .hole{stroke:#4d4d4d}
.ic .ghost{stroke:#808080}
.caret{fill:#bdbdbd}
.sep{width:1px;height:56px;background:#3a3a3a}
.sep.tall{height:56px}
.inp{height:55px;border-bottom:1px solid #6a6a6a;font:25px/60px Roboto,sans-serif;color:#eee}
.ctr{text-align:center}
.w58{width:58px}
.w126{width:126px}
.zoom{display:flex;align-items:center;justify-content:space-between;padding:0 16px 0 15px}
.zoom span{line-height:60px;font-size:24px}
.zoom .caret{margin-top:-6px}
.txt{font:25px/60px Roboto,sans-serif;color:#eee;height:55px}
.inp2{width:278px;height:59px;margin-top:-1px;border-bottom:1px solid #6a6a6a;display:flex;align-items:center;justify-content:space-between;padding:2px 13px 0 8px;font-size:25px;color:#a4a4a4}
.inp2 .caret{margin-top:-6px}
.act{font-size:28.500px;line-height:40px;margin-top:2px;color:#e2e2e2;width:58px;white-space:nowrap}
.ml7{margin-left:7px}.ml8{margin-left:8px}.ml9{margin-left:9px}.ml11{margin-left:11px}.ml12{margin-left:12px}.ml13{margin-left:13px}.ml14{margin-left:14px}
.ml29{margin-left:29px}.ml30{margin-left:30px}.ml32{margin-left:32px}.ml35{margin-left:35px}.ml36{margin-left:36px}.ml37{margin-left:37px}
.ml41{margin-left:41px}.ml42{margin-left:42px}.ml43{margin-left:43px}.ml44{margin-left:44px}.ml45{margin-left:45px}.ml46{margin-left:46px}.ml48{margin-left:48px}
.ml50{margin-left:50px}.ml53{margin-left:53px}.ml64{margin-left:64px}.ml983{margin-left:983px}.ml1124{margin-left:1124px}
.ml4{margin-left:4px}.ml26{margin-left:26px}.ml27{margin-left:27px}

/* thumbnails */
.grid{display:grid;grid-template-columns:repeat(3,1220px);column-gap:57px;margin-left:-156px}
.cell{display:flex;flex-direction:column;align-items:center;border:1px solid transparent}
.cell.top{border-top:0;padding-bottom:19px}
.cell.bot{padding-top:55px;padding-bottom:3px}
.cell.sel{background:#919ba4;border-color:#2f7ed0}
.sheet{position:relative;width:826px;background:#fff;overflow:hidden;border:1px solid #c4c4c4;border-top:0;color:#111}
.short{height:974px}
.tall-sheet{height:1166px;border-top:1px solid #c4c4c4}
.lab{margin-top:12px;height:32px;font:27px/32px Roboto,sans-serif;color:#dcdcdc;text-align:center;width:100%}
.sel .lab{color:#dfe3e6}

/* paper */
.doc{font:14.500px/19px "Liberation Serif","Noto Sans CJK SC",serif;white-space:nowrap;filter:blur(.35px)}
.doc sub,.doc sup{font-size:.7em;line-height:0}
.ss{display:inline-flex;flex-direction:column;vertical-align:5.500px;margin:-10px 0;font-size:.7em;line-height:.92}
.ss sub,.ss sup{font-size:1em;line-height:.92;vertical-align:baseline}
.u{text-decoration:underline}
.ov{border-top:1px solid #111}
.q{display:flex;margin-top:4.200px}
.q.mid{align-items:center}
.n{flex:none;font-weight:bold;text-align:right}
.a{flex:none}
.f{display:flex;align-items:center}
.g3{gap:3px}.g4{gap:4px}.g6{gap:6px}
.ch{font:bold 22px/28px "Liberation Sans","Noto Sans CJK SC",sans-serif}
.fr{display:inline-flex;flex-direction:column;align-items:center;line-height:18px}
.fr>span:first-child{border-bottom:1px solid #111;padding:0 1px}
.sf{display:inline-flex;flex-direction:column;align-items:center;vertical-align:middle;font-size:.66em;line-height:10px}
.sf>span:first-child{border-bottom:1px solid #111}
.b{width:9px;display:block}
.bc{position:relative;padding:0 10px}
.bc>.b{position:absolute;top:0;left:0;height:100%}
.bc>.b:last-child{left:auto;right:0;transform:scaleX(-1)}
.bc>div{display:flex;flex-direction:column;text-align:center;line-height:19.500px}
.bc>div>span{min-height:19.500px}
.pitch20>div{line-height:20px}
.w14>div{width:14px;line-height:19.600px}.w22>div{width:22px}.w40>div{width:40px}.w46>div{width:46px}.w60>div{width:60px}.w76>div{width:76px}
.m139b>div{width:34px;text-align:right;line-height:20px}
.m139b>div>span{min-height:20px}
.mx{display:grid;align-items:center;padding:0 5px;border-left:1.300px solid #111;border-right:1.300px solid #111;text-align:center;line-height:20px;
  background:linear-gradient(#111,#111) 0 0/5px 1.300px no-repeat,linear-gradient(#111,#111) 100% 0/5px 1.300px no-repeat,linear-gradient(#111,#111) 0 100%/5px 1.300px no-repeat,linear-gradient(#111,#111) 100% 100%/5px 1.300px no-repeat}
.mx>span{min-height:20px}
.mx.r{text-align:right}
.p20{grid-auto-rows:20px}.p21{grid-auto-rows:21px}.p22{grid-auto-rows:22px}
.m139{grid-template-columns:83px 65px;grid-auto-rows:20px}
.k3{grid-template-columns:repeat(3,19px)}
.k4{grid-template-columns:repeat(4,19.500px)}
.b5{font-weight:bold}
.rule{height:1.500px;background:#111;margin-top:3px}
.th{display:grid;height:20px;line-height:20px}
.tb{display:grid;grid-auto-rows:20.300px;line-height:20.300px;margin-top:4.300px;text-align:center}

/* wide-set formula text */
.p542 .a{font-size:15px;letter-spacing:.15px;word-spacing:1px}
.p542 .c15~.q{margin-top:4.600px}
.p542 .c15~.q .a{letter-spacing:.1px;word-spacing:1.500px}
.p543 .a{font-size:15px;letter-spacing:.2px;word-spacing:1px}
.dl{font-size:15px;letter-spacing:.1px;word-spacing:1px}
.p542 .mx,.p542 .bc,.p543 .mx,.p543 .bc{font-size:14.500px;letter-spacing:0}

/* 542 */
.p542 .n{width:179px;margin-right:14px}
.p542 .first{margin-top:-17px}
.ch{margin-left:147px}
.c14{margin-top:40px;margin-bottom:2.500px}
.c15{margin-top:43px;margin-bottom:-2px}

/* 543 */
.p543 .n{width:195.500px;margin-right:15px}
.p543 .q{margin-top:7.300px}
.p543 .first{margin-top:-1.500px}
.p543 .tight{margin-top:4px}
.p543 .flush{margin-top:0}
.p543 .c16{margin-top:56px;margin-left:165px;margin-bottom:-1px}

/* 544 */
.sec{display:flex}
.sec .n{width:183px;margin-right:11px;line-height:20px}
.s0{margin-top:5.500px}.s1{margin-top:5.300px}.s2{margin-top:4.300px}.s3{margin-top:8px}.s4{margin-top:6px}
.s00{margin-top:0}
.t66{grid-template-columns:50px 100.500px 86.600px 64.100px;padding-left:9.500px}
.t66>:nth-child(4n){text-align:right}
.t66b{grid-template-columns:50px 100.500px 86.600px 70.100px 83.300px;padding-left:9.500px}
.t66b>:nth-child(5n+4),.t66b>:nth-child(5n){text-align:right}
.h66{grid-template-columns:88px 80.300px 92px 98px;padding-left:3.500px}
.h66b{grid-template-columns:88px 80.300px 92px 98.200px 60px;padding-left:3.500px}
.r66a{margin-left:17px;width:305px}
.r66b{margin-left:17px;width:397.600px;margin-top:2.500px}
.t67{grid-template-columns:41px 118px 52px 126px 70px}
.h67{grid-template-columns:80px 80.300px 82px 94.600px 70px;padding-left:4px}
.r67{margin-left:5px;width:398px}
.t68{grid-template-columns:41px 95px 58px 122px 73px 119px}
.h68{grid-template-columns:71.300px 67.700px 84.400px 93.600px 100.500px 70px;padding-left:4px}
.top19{padding-left:4px;margin-bottom:1px}
.r68{margin-left:5px;width:471px;margin-top:2.500px}

/* lower row */
.scan{position:absolute;height:3px;background:#111;top:6px;right:0;box-shadow:0 1px 0 rgba(0,0,0,.25)}
.s545{left:8px;top:6px}
.s546{left:3px;top:2px;height:4px}
.s547{left:9px;top:4px}
.edge{position:absolute;width:1.500px}
.e542{left:2px;top:0;width:2px;height:974px;background:#bbb}
.e543{left:1px;top:0;width:3px;height:570px;background:#c4c4c4}
.e544{left:3px;top:14px;height:390px;background:repeating-linear-gradient(#555 0 52px,transparent 52px 107px)}
.e545{left:5px;top:8px;height:820px;background:repeating-linear-gradient(#999 0 30px,transparent 30px 60px)}
.e546{left:2px;top:585px;height:534px;background:repeating-linear-gradient(#666 0 48px,transparent 48px 97px)}
.e547{left:5px;top:8px;height:620px;background:repeating-linear-gradient(#aaa 0 30px,transparent 30px 60px)}
.hd{display:flex;justify-content:space-between;align-items:center;height:28px;border-bottom:2px solid #111;line-height:26px;white-space:nowrap}
.ttl{font:16px/26px "Noto Sans CJK SC",serif;letter-spacing:1.200px}
.pn{font:bold 17px/26px "Liberation Sans",sans-serif;letter-spacing:-.5px}
.h545{margin:76px 0 0 79px;width:675px;padding:0 20px 0 256px}
.h546{margin:75px 0 0 74px;width:674px;padding:0 228px 0 20px}
.h546 .ttl{letter-spacing:1.300px;font-size:15.500px}
.h547{margin:74px 0 0 87px;width:676px;padding:0 21px 0 259px}
.body{padding-left:104px;line-height:20px}
.body .n{width:46px;text-align:left}
.m0{margin-top:0}.m1{margin-top:1.500px}.m2{margin-top:2px}.m4{margin-top:4px}.m5{margin-top:5px}.m7{margin-top:7px}.m8{margin-top:8px}.m12{margin-top:12px}.m14{margin-top:14px}.m19{margin-top:19px}.mn1{margin-top:-1px}
.h617{grid-template-columns:107px 40px 108px 70px 102px 72px 102px;text-align:center;width:601px}
.h617>:first-child{text-align:left;padding-left:47px}
.r617{margin-left:46px;width:579px}
.ghead{display:grid;grid-template-columns:20px 52px auto;margin:5.500px 0 0 46px;height:20.200px;line-height:20.200px;text-align:center}
.ghead .tr2{text-align:right}
.ghead .tr3{text-align:left;padding-left:222px}
.t617{display:grid;grid-template-columns:20px 52px 66px 126px 87px 86px 87px 58px;margin-left:46px;grid-auto-rows:20.200px;line-height:20.200px;width:582px}
.t617>:nth-child(8n+1){text-align:center}
.t617>:nth-child(8n+2),.t617>:nth-child(8n+3){text-align:right}
.t617>:nth-child(8n+4){padding-left:32px}
.t617>.in{padding-left:39px}
.par{display:inline-flex;align-items:stretch;height:38px}
.par>.fr{align-self:center;padding:0 2px}
.par .b{width:8px;height:38px}
.par .b:nth-of-type(2){transform:scaleX(-1)}
.up{font-size:.68em;line-height:11px;align-self:flex-start;margin-left:-1px}
.node{height:20px}
.n545{padding-left:208px}
.h618{grid-template-columns:78px 40px 150px 74px auto;width:577px;text-align:center}
.h618>:first-child{text-align:left}
.h618>:last-child{text-align:left;padding-left:11px}
.r618{margin-left:7px;width:617px}
.tmp{height:20.300px;line-height:20.300px;margin-top:4.800px}
.t545{padding-left:217px}
.t18{display:grid;grid-template-columns:75px 71.500px 111.500px 90px;grid-auto-rows:20.300px;line-height:20.300px;margin-left:63px}
.h618b{grid-template-columns:78px 40px 108px 76px;width:302px;text-align:center}
.h618b>:first-child{text-align:left}

/* 546 */
.p546 .body{padding-left:140px}
.n546{padding-left:175px}
.r618b{margin-left:46px;width:291.500px;margin-top:2.500px}
.t546{padding-left:182.500px;margin-top:5px}
.t18.b{margin-left:63px;grid-template-columns:75px 52.500px 92.500px 90px;grid-auto-rows:20.200px;line-height:20.200px}
.app{margin-left:10px;margin-top:18px}
.app .n{width:36px}
.app .ch{margin-left:-9px}
.ca{margin-top:0}
.app .cb{margin-top:17px;margin-bottom:0}
.mA1a{grid-template-columns:21.500px 30px}
.mA1f{grid-template-columns:17px 32px 22px}
.mA2{grid-template-columns:21px 21px;padding:0 1px}
.mA3{grid-template-columns:20px 34px 32px}
.mA8{grid-template-columns:33px 50px}

/* 547 */
.p547 .body{padding-left:164px}
.p547 .n{width:35px}
.mB5a{grid-template-columns:20px 30px}
.mB5b{grid-template-columns:26px 34px}
.bc.w22>div{line-height:20px}
.cd{margin:21px 0 0 -1px}
.d1{margin-top:7.700px}
.dl{line-height:18.600px}
```
